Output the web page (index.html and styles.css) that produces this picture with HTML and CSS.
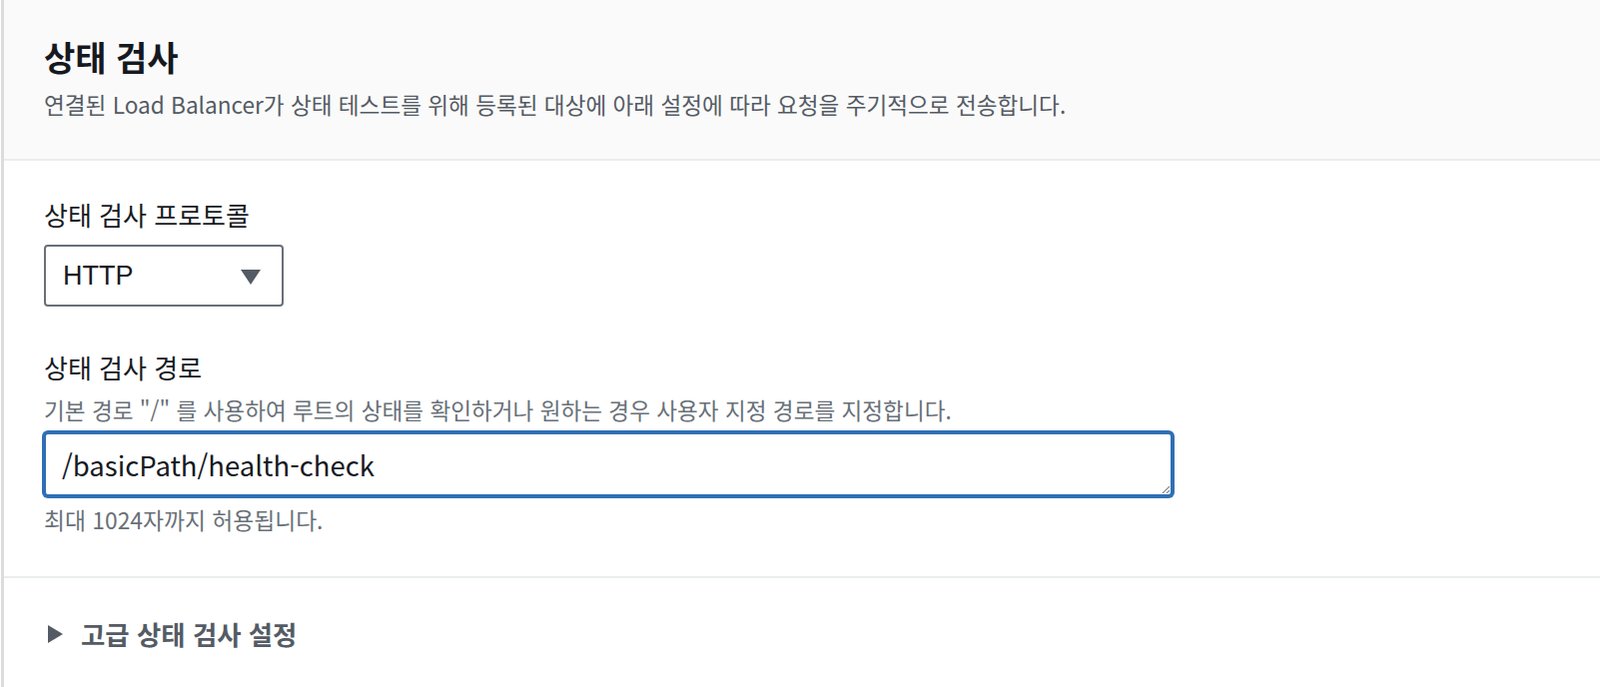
FILE: index.html
```html
<!DOCTYPE html>
<html lang="ko">
<head>
<meta charset="utf-8">
<title>상태 검사</title>
<link rel="stylesheet" href="styles.css">
</head>
<body>
<div class="page">
  <header class="header">
    <h2 class="title">상태 검사</h2>
    <p class="header-desc">연결된 Load Balancer가 상태 테스트를 위해 등록된 대상에 아래 설정에 따라 요청을 주기적으로 전송합니다.</p>
  </header>
  <section class="body">
    <div class="label">상태 검사 프로토콜</div>
    <div class="select">
      <span class="select-value">HTTP</span>
      <svg class="caret" width="20" height="15" viewBox="0 0 20 15"><polygon points="0,0 20,0 10,15" fill="#545b64"/></svg>
    </div>
    <div class="label label-2">상태 검사 경로</div>
    <div class="desc">기본 경로 "/" 를 사용하여 루트의 상태를 확인하거나 원하는 경우 사용자 지정 경로를 지정합니다.</div>
    <textarea class="path-input" rows="1">/basicPath/health-check</textarea>
    <div class="hint">최대 1024자까지 허용됩니다.</div>
  </section>
  <section class="advanced">
    <svg class="expand" width="15" height="18" viewBox="0 0 15 18"><polygon points="0,0 15,9 0,18" fill="#545b64"/></svg>
    <span class="advanced-text">고급 상태 검사 설정</span>
  </section>
</div>
</body>
</html>
```
FILE: styles.css
```css
html, body {
  margin: 0;
  padding: 0;
  background: #ffffff;
}
body {
  font-family: "Noto Sans CJK KR", "Noto Sans", sans-serif;
  color: #16191f;
}
.page {
  margin-left: 1px;
  border-left: 3px solid #dcdcdc;
  min-height: 688px;
  box-sizing: border-box;
}
.header {
  background: #fafafa;
  padding: 36px 40px 39px 40px;
  border-bottom: 2px solid #eaeded;
}
.title {
  margin: 0;
  font-size: 34px;
  line-height: 42px;
  font-weight: 700;
  color: #16191f;
}
.header-desc {
  margin: 12px 0 0 0;
  font-size: 22.6px;
  line-height: 30px;
  color: #545b64;
}
.body {
  padding: 37px 40px 41px 40px;
  border-bottom: 2px solid #eaeded;
}
.label {
  font-size: 26px;
  line-height: 34px;
  color: #16191f;
}
.label-2 {
  margin-top: 44px;
}
.select {
  margin-top: 13px;
  width: 240px;
  height: 62px;
  box-sizing: border-box;
  border: 2px solid #687078;
  border-radius: 4px;
  display: flex;
  align-items: center;
  justify-content: space-between;
  padding: 0 21px 0 17px;
  background: #fff;
}
.select-value {
  font-family: "Liberation Sans", Arial, sans-serif;
  font-size: 27px;
  color: #16191f;
}
.caret {
  display: block;
  margin-top: 2px;
}
.desc {
  margin-top: 11px;
  font-size: 22.6px;
  line-height: 30px;
  color: #687078;
}
.path-input {
  display: block;
  margin: 7px 0 0 0;
  width: 1130px;
  height: 64px;
  box-sizing: border-box;
  border: 2px solid #2f6fb6;
  box-shadow: 0 0 0 2px #2f6fb6;
  border-radius: 4px;
  padding: 12px 16px;
  font-family: "Noto Sans CJK KR", "Noto Sans", sans-serif;
  font-size: 27.5px;
  line-height: 36px;
  color: #16191f;
  background: #fff;
  outline: none;
  resize: vertical;
  overflow: hidden;
}
.hint {
  margin-top: 9px;
  font-size: 22.8px;
  line-height: 30px;
  color: #687078;
}
.advanced {
  padding: 39px 40px 0 44px;
  display: flex;
  align-items: center;
  gap: 18px;
}
.expand {
  display: block;
}
.advanced-text {
  font-size: 26.4px;
  line-height: 34px;
  font-weight: 700;
  color: #545b64;
}
```
